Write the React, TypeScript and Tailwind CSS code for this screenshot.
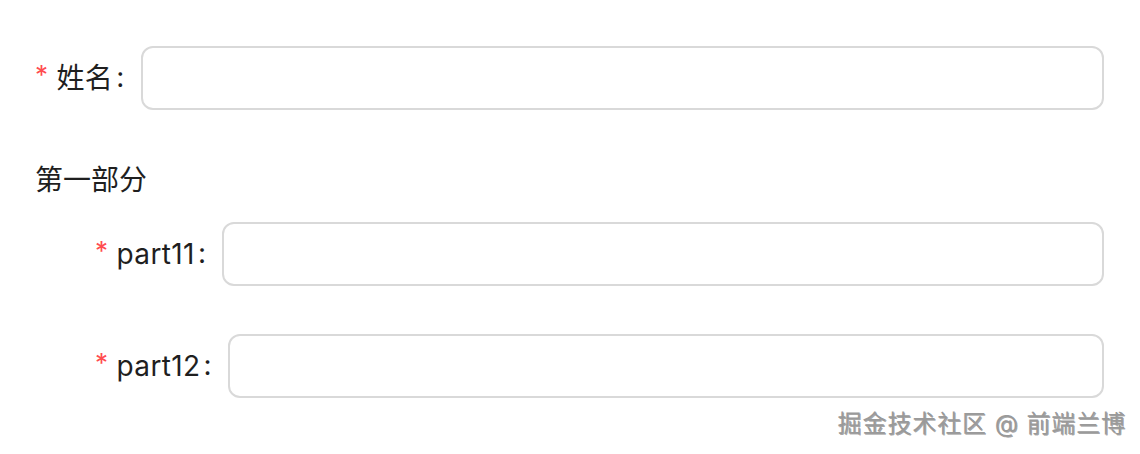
const font = "font-['Inter','Noto_Sans_CJK_SC',sans-serif]";

function FormRow({ label }: { label: string }) {
  return (
    <div className="flex items-center h-[64px]">
      <label className="flex items-center shrink-0 text-[28px] leading-[44px] tracking-[0.4px] text-[#1f1f1f]">
        <span className="text-[#ff4d4f] text-[26px] leading-none mr-[8px] -mt-[6px]">*</span>
        <span>{label}</span>
        <span className="ml-[3px] mr-[16px] -mt-[2px]">:</span>
      </label>
      <input
        type="text"
        className="flex-1 h-[64px] rounded-[12px] border-2 border-[#d9d9d9] bg-white px-[22px] text-[28px] outline-none"
      />
    </div>
  );
}

export default function App() {
  return (
    <div className={`relative w-[1140px] h-[454px] bg-white overflow-hidden ${font}`}>
      <div className="pt-[46px] pl-[35px] pr-[36px]">
        <FormRow label="姓名" />
        <div className="mt-[48px] text-[28px] leading-[44px] text-[#1f1f1f]">第一部分</div>
        <div className="pl-[60px] mt-[20px] flex flex-col gap-[48px]">
          <FormRow label="part11" />
          <FormRow label="part12" />
        </div>
      </div>
      <div className="absolute right-[14px] top-[406px] text-[24px] leading-[36px] tracking-[0.9px] text-[#9a9a9a] [text-shadow:1px_1px_0_rgba(0,0,0,0.35)]">
        掘金技术社区 @ 前端兰博
      </div>
    </div>
  );
}
